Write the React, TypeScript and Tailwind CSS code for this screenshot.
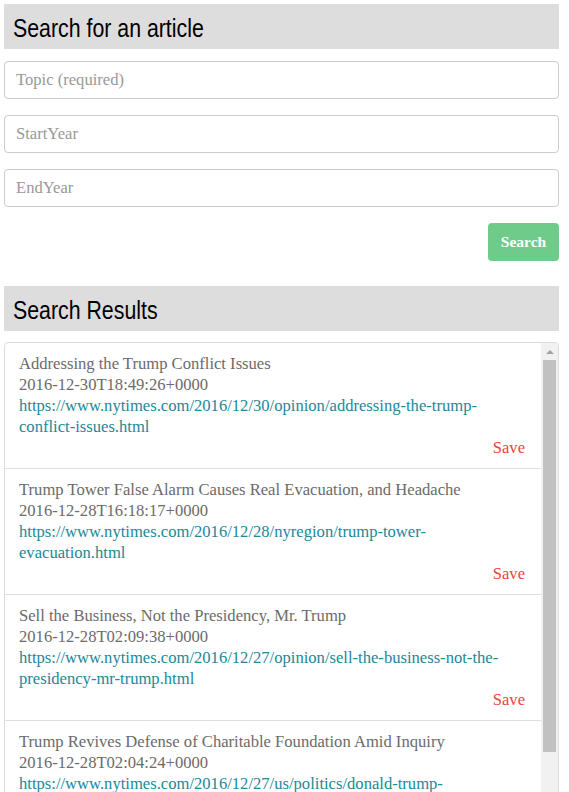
import React from 'react';

const articles = [
  {
    title: 'Addressing the Trump Conflict Issues',
    date: '2016-12-30T18:49:26+0000',
    url: 'https://www.nytimes.com/2016/12/30/opinion/addressing-the-trump-conflict-issues.html',
  },
  {
    title: 'Trump Tower False Alarm Causes Real Evacuation, and Headache',
    date: '2016-12-28T16:18:17+0000',
    url: 'https://www.nytimes.com/2016/12/28/nyregion/trump-tower-evacuation.html',
  },
  {
    title: 'Sell the Business, Not the Presidency, Mr. Trump',
    date: '2016-12-28T02:09:38+0000',
    url: 'https://www.nytimes.com/2016/12/27/opinion/sell-the-business-not-the-presidency-mr-trump.html',
  },
  {
    title: 'Trump Revives Defense of Charitable Foundation Amid Inquiry',
    date: '2016-12-28T02:04:24+0000',
    url: 'https://www.nytimes.com/2016/12/27/us/politics/donald-trump-foundation.html',
  },
];

function Header({ children }: { children: React.ReactNode }) {
  return (
    <div className="bg-[#dddddd] h-[45px] flex items-center px-[9px] pt-[3px] overflow-hidden">
      <h2 className="font-['Liberation_Sans',Arial,sans-serif] text-[26px] text-black leading-none whitespace-nowrap scale-x-[0.82] origin-left">
        {children}
      </h2>
    </div>
  );
}

export default function App() {
  return (
    <div className="bg-white min-h-screen pt-1 pl-1 pr-[10px] font-['Liberation_Serif',Georgia,serif]">
      <Header>Search for an article</Header>

      <form className="mt-3 flex flex-col gap-4">
        {['Topic (required)', 'StartYear', 'EndYear'].map(p => (
          <input
            key={p}
            placeholder={p}
            className="h-[38px] w-full border border-[#cccccc] rounded px-[11px] text-[16.6px] text-[#555] placeholder:text-[#999] outline-none"
          />
        ))}
        <div className="flex justify-end">
          <button
            type="button"
            className="bg-[#6fcb8a] text-white font-bold text-[15.5px] h-[38px] w-[71px] rounded"
          >
            Search
          </button>
        </div>
      </form>

      <div className="mt-[25px]">
        <Header>Search Results</Header>
      </div>

      <div className="mt-[11px] border border-[#dddddd] rounded-t h-[470px] flex overflow-hidden">
        <div className="flex-1 min-w-0">
          {articles.map(a => (
            <div key={a.date} className="border-b border-[#dddddd] px-[14px] py-[10px] text-[16.6px] leading-[21px]">
              <p className="text-[#6b6b6b]">{a.title}</p>
              <p className="text-[#6b6b6b]">{a.date}</p>
              <a href={a.url} className="text-[#23879a] break-words">{a.url}</a>
              <div className="flex justify-end pr-[2px]">
                <button type="button" className="text-[#e8473c]">Save</button>
              </div>
            </div>
          ))}
        </div>
        {/* fake scrollbar */}
        <div className="w-[17px] shrink-0 bg-[#f1f1f1] flex flex-col">
          <div className="h-[17px] flex items-center justify-center">
            <div className="w-0 h-0 border-x-[4px] border-x-transparent border-b-[4px] border-b-[#a3a3a3]" />
          </div>
          <div className="h-[392px] mx-[2px] bg-[#c1c1c1]" />
        </div>
      </div>
    </div>
  );
}
